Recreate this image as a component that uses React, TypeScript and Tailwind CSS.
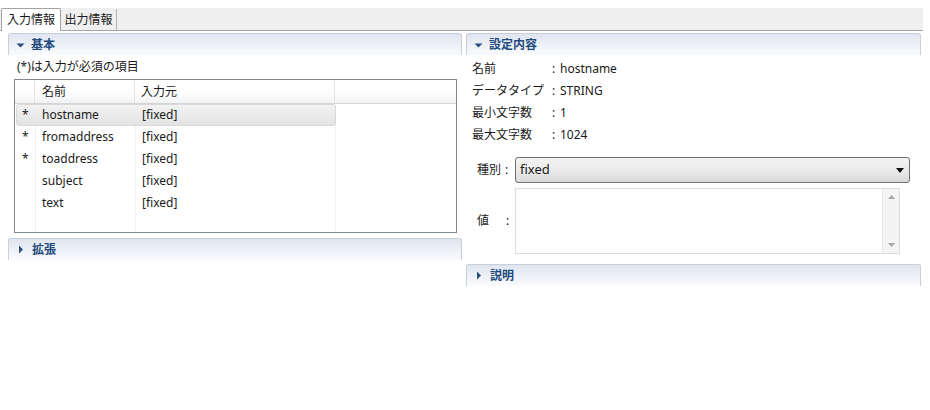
import React from "react";

const font = { fontFamily: '"Noto Sans", "Noto Sans CJK JP", sans-serif' };

function SectionHeader({ title, open }: { title: string; open: boolean }) {
  return (
    <div className="h-[22px] flex items-center rounded-t-[3px] border border-b-0 border-[#c8d0da] bg-gradient-to-b from-[#dfe5f0] to-[#fafbfd] pl-[6px]">
      {open ? (
        <svg width="9" height="8" viewBox="0 0 9 8" className="mr-[6px] ml-[1px]">
          <path d="M0.5 2.5 L8.5 2.5 L4.5 6.5 Z" fill="#2a4d7a" />
        </svg>
      ) : (
        <svg width="8" height="9" viewBox="0 0 8 9" className="mr-[7px] ml-[2px]">
          <path d="M2 0.5 L6 4.5 L2 8.5 Z" fill="#2a4d7a" />
        </svg>
      )}
      <span className="text-[12px] font-bold text-[#1f4b7d] leading-none">{title}</span>
    </div>
  );
}

const rows = [
  { req: true, name: "hostname", src: "[fixed]", sel: true },
  { req: true, name: "fromaddress", src: "[fixed]" },
  { req: true, name: "toaddress", src: "[fixed]" },
  { req: false, name: "subject", src: "[fixed]" },
  { req: false, name: "text", src: "[fixed]" },
];

export default function App() {
  return (
    <div className="w-[930px] h-[410px] bg-white text-[12px] text-[#1a1a1a] overflow-hidden" style={font}>
      <div className="h-[8px]" />
      <div className="w-[923px] h-[23px] bg-[#f0efef] border-b border-[#a3a3a3] flex items-end">
        <div className="h-[23px] -mb-px ml-[1px] w-[60px] bg-white border border-b-0 border-[#a3a3a3] rounded-t-[2px] flex items-center justify-center">
          入力情報
        </div>
        <div className="h-[21px] w-[56px] border-r border-[#b5b5b5] flex items-center justify-center">
          出力情報
        </div>
      </div>
      <div className="flex gap-[4px] pl-[8px] pt-[2px]">
        <div className="w-[454px] flex flex-col">
          <SectionHeader title="基本" open />
          <div className="h-[22px] flex items-center pl-[9px] mt-[1px]">(*)は入力が必須の項目</div>
          <div className="ml-[6px] mt-[1px] w-[443px] h-[154px] border border-[#828790] bg-white relative">
            <div className="h-[24px] flex bg-gradient-to-b from-white via-white to-[#f1f2f4] border-b border-[#d5d5d5]">
              <div className="w-[20px] border-r border-[#e3e3e3]" />
              <div className="w-[100px] border-r border-[#e3e3e3] flex items-center pl-[7px]">名前</div>
              <div className="w-[200px] border-r border-[#e3e3e3] flex items-center pl-[6px]">入力元</div>
              <div className="flex-1" />
            </div>
            <div className="absolute left-[20px] top-[25px] bottom-0 border-l border-[#eef0f2]" />
            <div className="absolute left-[120px] top-[25px] bottom-0 border-l border-[#eef0f2]" />
            <div className="absolute left-[320px] top-[25px] bottom-0 border-l border-[#eef0f2]" />
            <div className="relative">
              {rows.map((r) => (
                <div
                  key={r.name}
                  className={
                    "h-[22px] w-[320px] flex items-center " +
                    (r.sel
                      ? "ml-[1px] w-[319px] rounded-[3px] border border-[#d9d9d9] bg-gradient-to-b from-[#f2f2f2] to-[#e3e3e3]"
                      : "")
                  }
                >
                  <div className={"w-[20px] pl-[7px] " + (r.sel ? "-ml-[2px]" : "")}>{r.req ? "*" : ""}</div>
                  <div className="w-[100px] pl-[7px]">{r.name}</div>
                  <div className="w-[200px] pl-[7px]">{r.src}</div>
                </div>
              ))}
            </div>
          </div>
          <div className="mt-[5px]">
            <SectionHeader title="拡張" open={false} />
          </div>
        </div>
        <div className="w-[455px] flex flex-col">
          <SectionHeader title="設定内容" open />
          <div className="pl-[6px] pt-[3px] flex flex-col">
            {[
              ["名前", "hostname"],
              ["データタイプ", "STRING"],
              ["最小文字数", "1"],
              ["最大文字数", "1024"],
            ].map(([k, v]) => (
              <div key={k} className="h-[22px] flex items-center">
                <div className="w-[80px]">{k}</div>
                <div className="w-[8px]">:</div>
                <div>{v}</div>
              </div>
            ))}
          </div>
          <div className="flex items-center mt-[11px] pl-[11px]">
            <div className="w-[38px] flex">
              <span>種別</span>
              <span className="ml-[4px]">:</span>
            </div>
            <div className="w-[395px] h-[26px] rounded-[3px] border border-[#707070] bg-gradient-to-b from-[#f3f3f3] via-[#ebebeb] to-[#d9d9d9] flex items-center pl-[4px] pr-[5px]">
              <span className="flex-1 text-[13px]">fixed</span>
              <svg width="8" height="5" viewBox="0 0 8 5">
                <path d="M0 0 L8 0 L4 5 Z" fill="#111" />
              </svg>
            </div>
          </div>
          <div className="flex items-center mt-[5px] pl-[11px]">
            <div className="w-[38px] flex">
              <span>値</span>
              <span className="ml-[17px]">:</span>
            </div>
            <div className="w-[385px] h-[66px] border border-[#dcdcdc] bg-white flex justify-end">
              <div className="w-[17px] h-full bg-[#f4f4f4] border-l border-[#e8e8e8] flex flex-col items-center justify-between py-[6px]">
                <svg width="7" height="4" viewBox="0 0 7 4">
                  <path d="M0 4 L7 4 L3.5 0 Z" fill="#a8a8a8" />
                </svg>
                <svg width="7" height="4" viewBox="0 0 7 4">
                  <path d="M0 0 L7 0 L3.5 4 Z" fill="#a8a8a8" />
                </svg>
              </div>
            </div>
          </div>
          <div className="mt-[10px]">
            <SectionHeader title="説明" open={false} />
          </div>
        </div>
      </div>
    </div>
  );
}
